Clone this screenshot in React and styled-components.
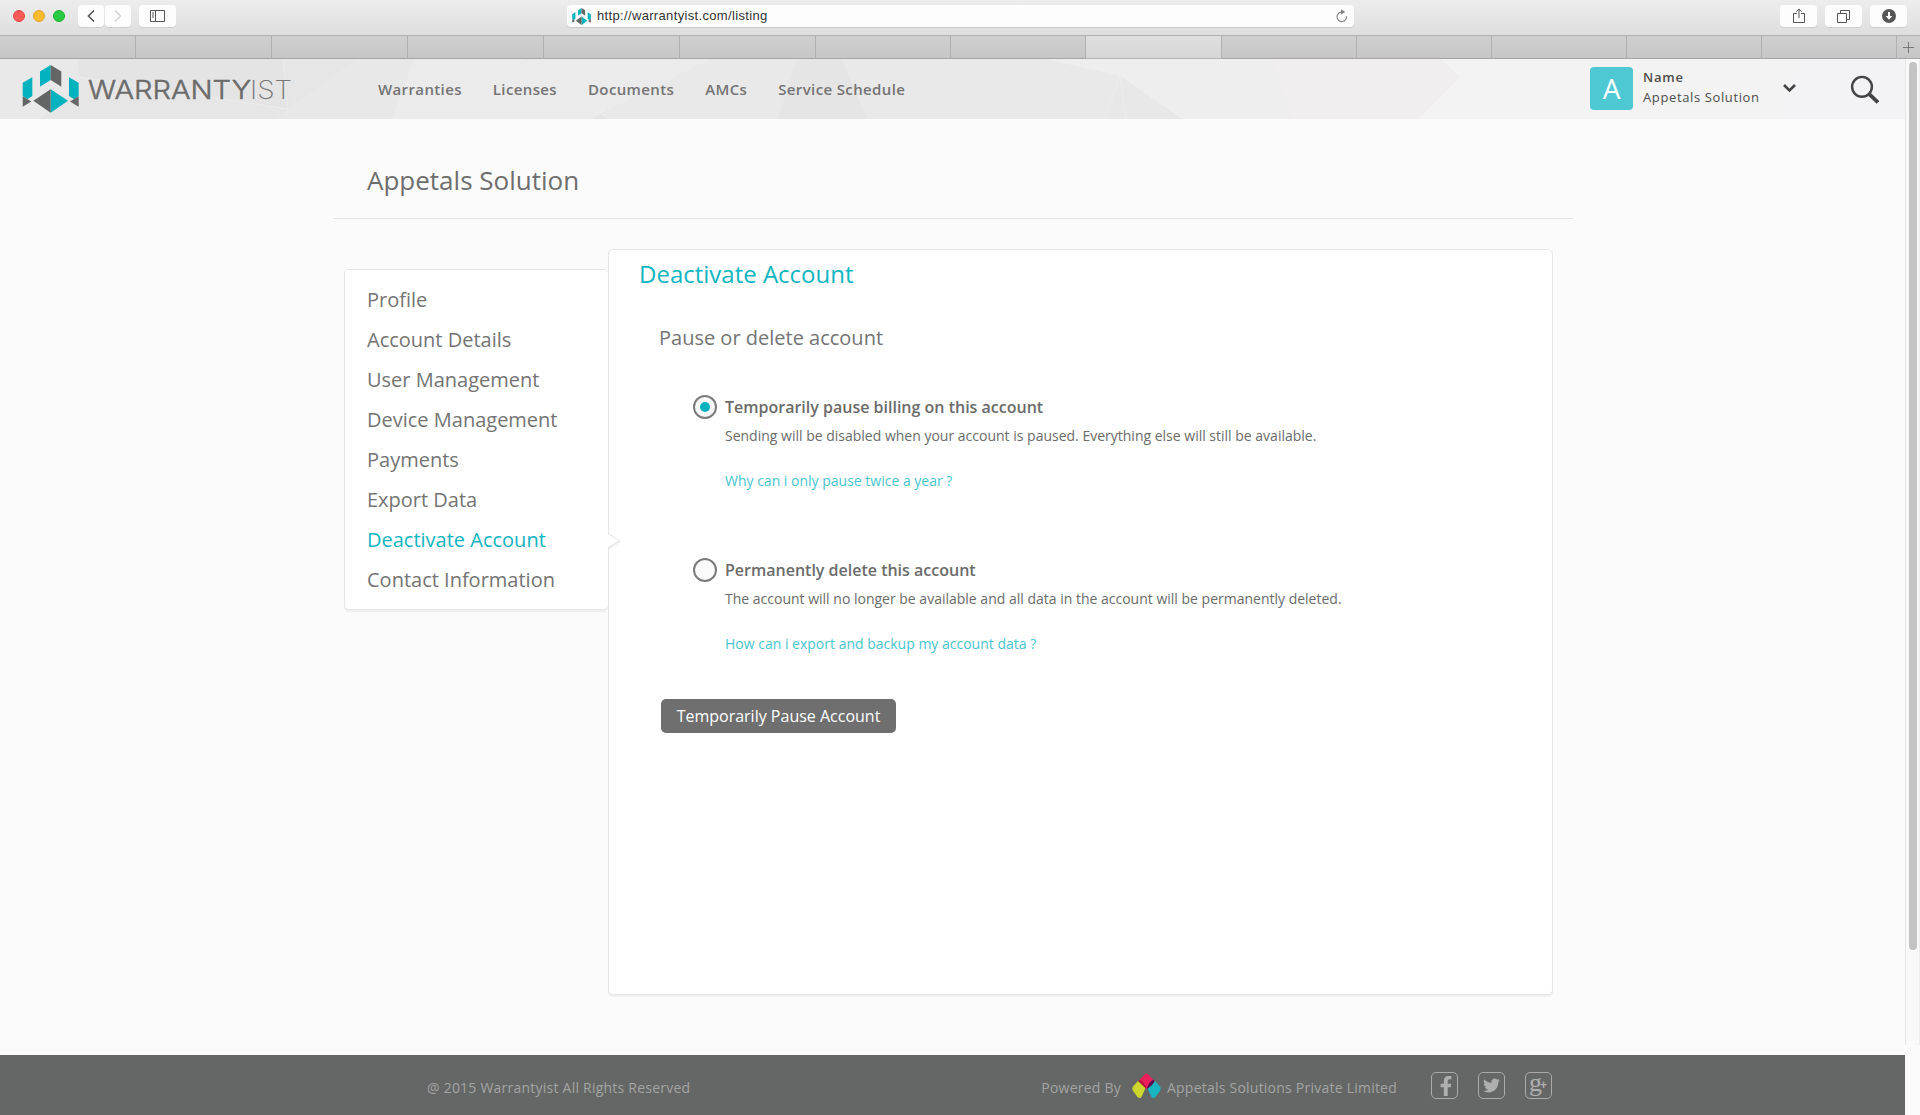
import React from "react";
import styled, { createGlobalStyle } from "styled-components";
import { FaFacebookF, FaTwitter } from "react-icons/fa";

const GlobalStyle = createGlobalStyle`
  * { box-sizing: border-box; }
  body {
    margin: 0;
    background: #fbfbfb;
    color: #6b6b6b;
    font-family: "Open Sans", "Noto Sans", sans-serif;
    overflow: hidden;
  }
  ul { list-style: none; margin: 0; padding: 0; }
  h1, h2, h3, p { margin: 0; font-weight: 400; }
`;

const Window = styled.div`
  width: 1920px;
  height: 1115px;
  display: flex;
  flex-direction: column;
`;

/* browser chrome */
const Toolbar = styled.div`
  height: 36px;
  flex: none;
  display: grid;
  grid-template-columns: 567px 787px 1fr;
  align-items: start;
  padding-top: 5px;
  background: linear-gradient(#ededed, #dedede);
  border-bottom: 1px solid #b1b1b1;
`;
const ToolGroup = styled.div`
  display: flex;
  justify-content: ${(p) => (p.$end ? "flex-end" : "flex-start")};
  padding: ${(p) => (p.$end ? "0 13px 0 0" : "0 0 0 13px")};
  gap: ${(p) => p.$gap}px;
`;
const Lights = styled.div`
  display: flex;
  align-items: center;
  gap: 8px;
  height: 22px;
  margin-right: 13px;
`;
const Light = styled.span`
  width: 12px;
  height: 12px;
  border-radius: 50%;
  background: ${(p) => p.$color};
  border: 1px solid ${(p) => p.$edge};
`;
const ToolButton = styled.span`
  width: ${(p) => p.$w || 37}px;
  height: 22px;
  margin-left: ${(p) => p.$ml || 0}px;
  display: flex;
  align-items: center;
  justify-content: center;
  border-radius: 4px;
  background: #fdfdfd;
  box-shadow: 0 1px 0 #cdcdcd;
`;
const Address = styled.div`
  height: 22px;
  display: flex;
  align-items: center;
  padding: 0 6px 0 5px;
  border-radius: 4px;
  background: #fdfdfd;
  box-shadow: 0 1px 0 #c9c9c9;
  font: 13px/22px "Liberation Sans", Arial, sans-serif;
  letter-spacing: 0.34px;
  color: #333;
`;
const Url = styled.span`
  flex: 1;
  margin-left: 6px;
`;
const Tabs = styled.div`
  height: 23px;
  flex: none;
  display: grid;
  grid-template-columns: repeat(6, 136px) 135px 135px 136px repeat(5, 135px) 1fr;
`;
const Tab = styled.div`
  display: flex;
  align-items: center;
  justify-content: center;
  background: ${(p) => (p.$active ? "linear-gradient(#dfdfdf, #d6d6d6)" : "linear-gradient(#cfcfcf, #c6c6c6)")};
  border-bottom: 1px solid ${(p) => (p.$active ? "#b5b5b5" : "#a5a5a5")};
  border-right: ${(p) => (p.$last ? 0 : 1)}px solid #b0b0b0;
`;

/* page */
const Viewport = styled.div`
  flex: 1;
  min-height: 0;
  display: flex;
`;
const Page = styled.div`
  width: 1905px;
  display: flex;
  flex-direction: column;
`;
const Track = styled.div`
  width: 15px;
  height: 986px;
  padding: 3px 2px 0 3px;
  border-left: 1px solid #e6e6e6;
  border-right: 1px solid #ededed;
  background: #f9f9f9;
`;
const Thumb = styled.div`
  width: 8px;
  height: 888px;
  border-radius: 4px;
  background: #c3c3c3;
`;

const Header = styled.header`
  position: relative;
  height: 60px;
  flex: none;
  display: flex;
  background: #e6e6e6;
`;
const Facets = styled.svg`
  position: absolute;
  inset: 0;
`;
const Brand = styled.div`
  position: relative;
  display: flex;
  width: 378px;
  padding: 6px 0 0 22px;
`;
const Wordmark = styled.svg`
  margin: 2px 0 0 9px;
  overflow: visible;
  font-family: Inter, sans-serif;
  font-size: 26px;
`;
const Nav = styled.nav`
  position: relative;
  flex: 1;
  display: flex;
  gap: 31px;
  font-size: 15px;
  font-weight: 600;
  line-height: 60px;
  letter-spacing: 0.37px;
  color: #747474;
`;
const Account = styled.div`
  position: relative;
  display: flex;
  align-items: flex-start;
  padding: 8px 26px 0 0;
`;
const Avatar = styled.div`
  width: 43px;
  height: 43px;
  border-radius: 4px;
  background: #4ec9d4;
  color: #fff;
  font-size: 28px;
  line-height: 42px;
  text-align: center;
`;
const Identity = styled.div`
  width: 140px;
  margin-left: 10px;
  font-size: 13px;
  line-height: 20px;
  letter-spacing: 0.62px;
  color: #4d4d4d;
`;
const Strong = styled.div`
  font-weight: 600;
  letter-spacing: 0.8px;
`;

const Main = styled.main`
  flex: 1;
`;
const Heading = styled.h1`
  width: 1240px;
  height: 100px;
  margin-left: 333px;
  padding: 43px 34px 0;
  border-bottom: 1px solid #e4e4e4;
  font-size: 26px;
  line-height: 36px;
  color: #6e6e6e;
`;
const Columns = styled.div`
  display: flex;
  align-items: flex-start;
  margin: 30px 0 0 344px;
`;
const Sidebar = styled.ul`
  width: 264px;
  height: 341px;
  margin-top: 20px;
  padding: 10px 0 0 22px;
  background: #fff;
  border: 1px solid #e6e6e6;
  border-right: 0;
  border-radius: 5px;
  box-shadow: 0 2px 0 #efefef;
`;
const SideItem = styled.li`
  position: relative;
  font-size: 20px;
  line-height: 40px;
  color: ${(p) => (p.$active ? "#0fb5c1" : "#747474")};
`;
const Pointer = styled.svg`
  position: absolute;
  left: 241px;
  top: 12px;
  z-index: 1;
`;
const Panel = styled.section`
  width: 945px;
  height: 746px;
  padding: 7px 0 0 30px;
  background: #fff;
  border: 1px solid #e6e6e6;
  border-radius: 5px;
  box-shadow: 0 2px 0 #efefef;
`;
const PanelTitle = styled.h2`
  font-size: 24px;
  line-height: 34px;
  color: #0fb5c1;
`;
const PanelSubtitle = styled.h3`
  margin: 33px 0 0 20px;
  font-size: 20px;
  line-height: 28px;
  color: #747474;
`;
const Options = styled.div`
  display: flex;
  flex-direction: column;
  gap: 67px;
  margin: 43px 0 0 54px;
`;
const Option = styled.div`
  display: grid;
  grid-template-columns: 24px 1fr;
  column-gap: 8px;
`;
const Radio = styled.span`
  width: 24px;
  height: 24px;
  display: grid;
  place-items: center;
  border: 2px solid #7b7b7b;
  border-radius: 50%;
  background: #fafafa;
`;
const Dot = styled.span`
  width: 10px;
  height: 10px;
  border-radius: 50%;
  background: #00b1bd;
`;
const Label = styled.div`
  font-size: 16px;
  line-height: 24px;
  font-weight: 600;
`;
const Copy = styled.p`
  grid-column: 2;
  margin-top: 7px;
  font-size: 14px;
  line-height: 20px;
`;
const Link = styled.a`
  grid-column: 2;
  margin-top: 25px;
  font-size: 14px;
  line-height: 20px;
  color: #47c5cf;
`;
const Button = styled.button`
  display: block;
  width: 235px;
  height: 34px;
  margin: 45px 0 0 22px;
  padding: 0;
  border: 0;
  border-radius: 5px;
  background: #6f6f6f;
  color: #fff;
  font: 16px/34px "Open Sans", sans-serif;
`;

const Footer = styled.footer`
  height: 60px;
  flex: none;
  display: flex;
  padding: 17px 353px 0 427px;
  justify-content: space-between;
  background: #656766;
  color: #a3a4a3;
  font-size: 14px;
  line-height: 31px;
  letter-spacing: 0.23px;
`;
const Powered = styled.div`
  display: flex;
  align-items: flex-start;
`;
const Petals = styled.svg`
  margin: 1px 6px 0 11px;
`;
const Socials = styled.div`
  display: flex;
  gap: 20px;
  margin-left: 34px;
`;
const Social = styled.span`
  width: 27px;
  height: 27px;
  display: flex;
  align-items: center;
  justify-content: center;
  padding-left: ${(p) => p.$shift || 0}px;
  border: 1px solid #a9aaa9;
  border-radius: 5px;
  color: #aeafae;
`;
const Gee = styled.span`
  font: 400 26px/20px "Liberation Serif", serif;
  letter-spacing: 0;
  margin: -6px 0 0 -1px;
`;
const Plus = styled.span`
  font: 700 12px/20px "Liberation Sans", sans-serif;
  letter-spacing: 0;
  margin: -1px 0 0 -2px;
`;

const LogoMark = ({ width, height }) => (
  <svg width={width} height={height} viewBox="66 194 171 146" preserveAspectRatio="none">
    <g fill="#03b2bf">
      <path d="M68 248 97 231V288L82 298 68 288Z" />
      <path d="M120 214 152 194V240L120 260Z" />
      <path d="M152 268 204 303 152 339Z" />
      <path d="M236 248 207 231V288L222 298 236 288Z" />
    </g>
    <g fill="#646665">
      <path d="M68 289 94 305 68 321Z" />
      <path d="M152 194 184 214V260L152 240Z" />
      <path d="M152 268 100 303 152 339Z" />
      <path d="M236 289 210 305 236 321Z" />
    </g>
  </svg>
);

const Chevron = ({ dir, color }) => (
  <svg width="8" height="14" viewBox="0 0 8 14" fill="none" stroke={color} strokeWidth="1.6">
    <path d={dir === "left" ? "M7 1.5 1.5 7 7 12.5" : "M1 1.5 6.5 7 1 12.5"} />
  </svg>
);

const navItems = ["Warranties", "Licenses", "Documents", "AMCs", "Service Schedule"];
const sideItems = [
  "Profile",
  "Account Details",
  "User Management",
  "Device Management",
  "Payments",
  "Export Data",
  "Deactivate Account",
  "Contact Information",
];
const options = [
  {
    label: "Temporarily pause billing on this account",
    copy: "Sending will be disabled when your account is paused. Everything else will still be available.",
    link: "Why can i only pause twice a year ?",
    checked: true,
  },
  {
    label: "Permanently delete this account",
    copy: "The account will no longer be available and all data in the account will be permanently deleted.",
    link: "How can i export and backup my account data ?",
  },
];

export default function App() {
  return (
    <Window>
      <GlobalStyle />
      <Toolbar>
        <ToolGroup $gap={0}>
          <Lights>
            <Light $color="#fc5b57" $edge="#e64b47" />
            <Light $color="#fdbc2e" $edge="#e2a42b" />
            <Light $color="#28ca41" $edge="#1fb034" />
          </Lights>
          <ToolButton $w={26}><Chevron dir="left" color="#555" /></ToolButton>
          <ToolButton $w={26} $ml={1}><Chevron dir="right" color="#d6d6d6" /></ToolButton>
          <ToolButton $ml={8}>
            <svg width="15" height="12" viewBox="0 0 15 12" fill="none" stroke="#555">
              <path d="M.5.5h14v11H.5ZM5.5.5v11M2 3h2M2 5h2M2 7h2" />
            </svg>
          </ToolButton>
        </ToolGroup>
        <Address>
          <LogoMark width={19} height={17} />
          <Url>http://warrantyist.com/listing</Url>
          <svg width="12" height="14" viewBox="0 0 12 14">
            <path d="M5.5 3A4.8 4.8 0 1 0 10.6 7.3" fill="none" stroke="#808080" strokeWidth="1.1" />
            <path d="M5 .3 9.3 2.9 5 5.5Z" fill="#808080" />
          </svg>
        </Address>
        <ToolGroup $end $gap={8}>
          <ToolButton>
            <svg width="12" height="16" viewBox="0 0 12 16" fill="none" stroke="#555">
              <path d="M4 5.5H.5v9h11v-9H8M6 10V1.2M3.3 3.7 6 1l2.7 2.7" />
            </svg>
          </ToolButton>
          <ToolButton>
            <svg width="13" height="13" viewBox="0 0 13 13" fill="none" stroke="#555">
              <path d="M.5 3.5h9v9h-9ZM3.5 3V.5h9v9H10" />
            </svg>
          </ToolButton>
          <ToolButton>
            <svg width="14" height="14" viewBox="0 0 14 14">
              <circle cx="7" cy="7" r="7" fill="#555" />
              <path d="M6 3h2v4h2.3L7 10.8 3.7 7H6Z" fill="#fff" />
            </svg>
          </ToolButton>
        </ToolGroup>
      </Toolbar>
      <Tabs>
        {Array.from({ length: 14 }, (_, i) => (
          <Tab key={i} $active={i === 8} />
        ))}
        <Tab $last>
          <svg width="11" height="11" viewBox="0 0 11 11" stroke="#777">
            <path d="M5.5 0v11M0 5.5h11" />
          </svg>
        </Tab>
      </Tabs>

      <Viewport>
        <Page>
          <Header>
            <Facets width="1905" height="60" viewBox="0 0 1905 60">
              <path d="M0 0H78V25L40 60H0Z" fill="#e9e9e9" />
              <path d="M78 0H283L290 50 80 18Z" fill="#e4e4e4" />
              <path d="M357 0H414L392 60H275L288 50Z" fill="#e8e8e8" />
              <path d="M414 0H1050V60H392Z" fill="#ebebeb" />
              <path d="M600 55 710 0H1050V60H592Z" fill="#e9e9e9" />
              <path d="M600 55 592 60H608Z" fill="#e4e4e4" />
              <path d="M797 0H842L867 60H778Z" fill="#e5e5e5" />
              <path d="M842 0H1044L1120 17 1182 60H867Z" fill="#e9e9e9" />
              <path d="M1044 0H1440L1460 18 1418 60H1182L1120 17Z" fill="#eeeeee" />
              <path d="M1120 17 1105 60H1182Z" fill="#e8e8e8" />
              <path d="M1272 0H1440L1460 18 1418 60H1292Z" fill="#f0eeee" />
              <path d="M1440 0H1905V60H1418L1460 18Z" fill="#f3f3f3" />
              <path d="M1800 0H1905V60H1780Z" fill="#f3f3f5" />
              <g stroke="#f0f0f0" fill="none" strokeOpacity=".6">
                <path d="M520 0 600 55 628 0M78 18 288 50M283 0 288 50M1105 60 1120 17 1126 60M1113 0 1120 17" />
              </g>
            </Facets>
            <Brand>
              <LogoMark width={57} height={48} />
              <Wordmark width="210" height="46" viewBox="0 0 210 46">
                <text x="0" y="32" textLength="163" lengthAdjust="spacingAndGlyphs" fontWeight="300" fill="#6b6b6b" stroke="#6b6b6b" strokeWidth=".5">WARRANTY</text>
                <text x="162" y="32" textLength="42" lengthAdjust="spacingAndGlyphs" fontWeight="200" fill="#777">IST</text>
              </Wordmark>
            </Brand>
            <Nav>
              {navItems.map((item) => <span key={item}>{item}</span>)}
            </Nav>
            <Account>
              <Avatar>A</Avatar>
              <Identity>
                <Strong>Name</Strong>
                <div>Appetals Solution</div>
              </Identity>
              <svg width="96" height="44" viewBox="0 0 96 44" fill="none" stroke="#444">
                <path d="m1 18 5.5 5.5L12 18" strokeWidth="2.6" />
                <circle cx="79" cy="19.8" r="9.9" strokeWidth="2.4" />
                <path d="m86.500 27.300 8.500 8" strokeWidth="3.8" />
              </svg>
            </Account>
          </Header>

          <Main>
            <Heading>Appetals Solution</Heading>
            <Columns>
              <Sidebar>
                {sideItems.map((item) => (
                  <SideItem key={item} $active={item === "Deactivate Account"}>
                    {item}
                    {item === "Deactivate Account" && (
                      <Pointer width="14" height="18" viewBox="0 0 14 18">
                        <path d="M1 3.5 12 10 1 16.5" fill="none" stroke="#efefef" strokeWidth="1.5" />
                        <path d="M0 2H1L11.5 8.5 1 15H0Z" fill="#fff" />
                        <path d="M1 2 11.5 8.5 1 15" fill="none" stroke="#e3e3e3" />
                      </Pointer>
                    )}
                  </SideItem>
                ))}
              </Sidebar>
              <Panel>
                <PanelTitle>Deactivate Account</PanelTitle>
                <PanelSubtitle>Pause or delete account</PanelSubtitle>
                <Options>
                  {options.map((option) => (
                    <Option key={option.label}>
                      <Radio>{option.checked && <Dot />}</Radio>
                      <Label>{option.label}</Label>
                      <Copy>{option.copy}</Copy>
                      <Link>{option.link}</Link>
                    </Option>
                  ))}
                </Options>
                <Button>Temporarily Pause Account</Button>
              </Panel>
            </Columns>
          </Main>

          <Footer>
            <span>@ 2015 Warrantyist All Rights Reserved</span>
            <Powered>
              <span>Powered By</span>
              <Petals width="29" height="27" viewBox="0 0 29 27">
                <path d="M6 8 13.5 15 9.5 24Q8 26 5.5 24L.8 17.5Q-.3 15.5 1 13.5Z" fill="#cdd62f" />
                <path d="M23 8 15.5 15 19.5 24Q21 26 23.5 24L28.2 17.5Q29.3 15.5 28 13.5Z" fill="#19b4c1" />
                <path d="M6.5 8 13 1.2Q14.5 0 16 1.2L22.5 8 14.5 16Z" fill="#ea1f5c" />
                <path d="M6.5 8 8 6.8Q12 9 14.5 16Z" fill="#b5122e" />
                <path d="M22.5 8 21 6.8Q17 9 14.5 16 21 12.5 22.5 8Z" fill="#5b0f52" />
              </Petals>
              <span>Appetals Solutions Private Limited</span>
              <Socials>
                <Social $shift={3}><FaFacebookF size={20} /></Social>
                <Social><FaTwitter size={17} /></Social>
                <Social><Gee>g</Gee><Plus>+</Plus></Social>
              </Socials>
            </Powered>
          </Footer>
        </Page>
        <Track><Thumb /></Track>
      </Viewport>
    </Window>
  );
}
